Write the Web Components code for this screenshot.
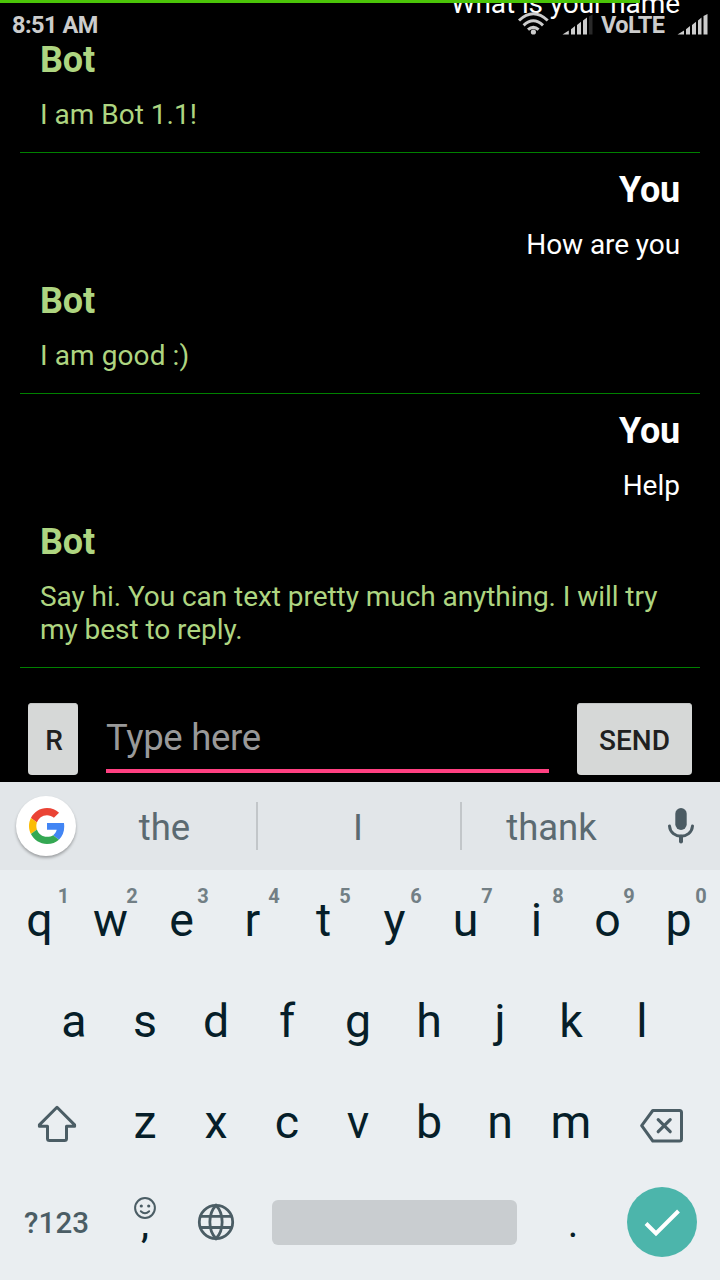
<!DOCTYPE html>
<html lang="en">
<head>
<meta charset="utf-8">
<title>Bot chat</title>
<style>
  html, body { margin: 0; background: #000; }
  body { font-family: Roboto, "Liberation Sans", sans-serif; overflow: hidden; }
</style>
</head>
<body>
<bot-app></bot-app>
<script>
const define = (name, html) => customElements.define(name, class extends HTMLElement {
  constructor() {
    super();
    this.attachShadow({ mode: "open" }).innerHTML = typeof html === "function" ? html(this) : html;
  }
});

/* Icons: each entry is [width, height, viewBox, markup]. */
const icons = {
  wifi: [32, 24, "517 12 32 24", `<g fill="none" stroke="#ccc" stroke-width="3"><path d="M519 20.5Q533.300 7 547.700 20.500M523.600 25.300Q533.300 16.200 543 25.300M528 29.700Q533.300 25 538.600 29.700"/></g><circle cx="533.400" cy="32" r="2.600" fill="#ccc"/>`],
  signal4: [31, 22, "562 14 31 22", `<path fill="#ccc" d="M562.500 34.500 568.800 30.500V34.500ZM571 29.300 575 26V34.500H571ZM577 25 581 21.800V34.500H577ZM583 20.500 587 17.500V34.500H583Z"/><path fill="#292929" d="M589 16.500 592.500 14.500V34.500H589Z"/>`],
  signal5: [31, 22, "677 14 31 22", `<path fill="#ccc" d="M677.500 34.500 684 30.500V34.500ZM686 29.300 690 26V34.500H686ZM692 25 696 21.800V34.500H692ZM698 20.500 701.500 17.500V34.500H698ZM703.500 16 707.500 14V34.500H703.500Z"/>`],
  google: [36, 36, "0 0 48 48", `<path fill="#EA4335" d="M24 9.500c3.540 0 6.710 1.220 9.210 3.600l6.850-6.850C35.900 2.380 30.470 0 24 0 14.620 0 6.510 5.380 2.560 13.220l7.980 6.190C12.430 13.720 17.740 9.500 24 9.500z"/><path fill="#4285F4" d="M46.980 24.550c0-1.570-.15-3.090-.38-4.550H24v9.020h12.940c-.58 2.960-2.260 5.480-4.780 7.180l7.730 6c4.510-4.180 7.090-10.360 7.090-17.650z"/><path fill="#FBBC05" d="M10.530 28.590c-.48-1.450-.76-2.990-.76-4.590s.27-3.140.76-4.590l-7.980-6.190C.92 16.460 0 20.120 0 24c0 3.880.92 7.540 2.560 10.780l7.970-6.190z"/><path fill="#34A853" d="M24 48c6.480 0 11.930-2.130 15.890-5.810l-7.730-6c-2.150 1.450-4.920 2.300-8.160 2.300-6.260 0-11.570-4.220-13.470-9.910l-7.980 6.190C6.510 42.620 14.620 48 24 48z"/>`],
  mic: [28, 37, "667 807 28 37", `<rect x="675.300" y="808" width="11.400" height="22" rx="5.700" fill="#4b5b63"/><path d="M669.500 826C670.500 839.500 691.500 839.500 692.500 826" fill="none" stroke="#4b5b63" stroke-width="3" stroke-linecap="round"/><path d="M681 836.500V841.500" stroke="#4b5b63" stroke-width="4" stroke-linecap="round"/>`],
  shift: [40, 38, "37 1105 40 38", `<path d="M57 1107.300 74.600 1124.900V1126.200H66.500V1138.500Q66.500 1140.500 64.500 1140.500H49.500Q47.500 1140.500 47.500 1138.500V1126.200H39.400V1124.900Z" fill="none" stroke="#4b5d65" stroke-width="3" stroke-linejoin="round"/>`],
  erase: [44, 36, "640 1108 44 36", `<path d="M652.800 1110.500H679.500Q681.500 1110.500 681.500 1112.500V1139Q681.500 1141 679.500 1141H652.800L641.700 1125.700Z" fill="none" stroke="#4b5d65" stroke-width="3" stroke-linejoin="round"/><path d="M658.200 1119.700 670.200 1131.700M670.200 1119.700 658.200 1131.700" stroke="#4b5d65" stroke-width="3.200" stroke-linecap="round"/>`],
  smile: [24, 24, "133 1196 24 24", `<circle cx="145" cy="1208" r="9.900" fill="none" stroke="#4b5d65" stroke-width="2"/><circle cx="141.300" cy="1206" r="1.600" fill="#4b5d65"/><circle cx="148.700" cy="1206" r="1.600" fill="#4b5d65"/><path d="M140.800 1211.200Q145 1215.200 149.200 1211.200" fill="none" stroke="#4b5d65" stroke-width="1.900" stroke-linecap="round"/>`],
  globe: [38, 38, "197 1203 38 38", `<g fill="none" stroke="#4b5d65" stroke-width="2.800"><circle cx="216" cy="1222" r="16.700"/><path d="M201 1216.400H231M201 1227.500H231M216 1205.300C207.800 1214 207.800 1230 216 1238.700C224.200 1230 224.200 1214 216 1205.300Z"/></g>`],
  check: [70, 70, "627 1187 70 70", `<circle cx="662" cy="1222" r="35" fill="#4cb5ab"/><path d="M646 1223.500 656 1233.500 678.500 1211" fill="none" stroke="#fff" stroke-width="4"/>`]
};
define("ui-icon", el => {
  const [w, h, box, body] = icons[el.getAttribute("name")];
  return `<style>:host{display:block;flex:none}svg{display:block}</style><svg width="${w}" height="${h}" viewBox="${box}">${body}</svg>`;
});

define("status-bar", `
<style>
  :host { position: absolute; inset: 0 0 auto 0; height: 50px; display: flex; flex-direction: column; z-index: 2; color: #ccc; }
  .load { width: 640px; height: 3px; background: #4bc408; }
  .row { display: flex; align-items: flex-start; padding: 8px 12px 0; font: 700 23.500px/28px Roboto, sans-serif; }
  .time { flex: 1; letter-spacing: -.5px; }
  .wifi { margin: 1px 13px 0 0; }
  .sig { margin-top: 3px; }
  .volte { width: 67px; margin: 0 9px 0 8px; letter-spacing: -.5px; }
</style>
<div class="load"></div>
<div class="row"><span class="time">8:51 AM</span><ui-icon class="wifi" name="wifi"></ui-icon><ui-icon class="sig" name="signal4"></ui-icon><span class="volte">VoLTE</span><ui-icon class="sig" name="signal5"></ui-icon></div>`);

define("chat-message", el => `
<style>
  :host { display: block; color: #fff; text-align: right; padding: 0 20px; margin-bottom: 19px; }
  :host([from="Bot"]) { color: #aed581; text-align: left; margin-bottom: 21px; }
  .name { font-weight: 700; font-size: 36px; line-height: 42px; margin-bottom: 17px; letter-spacing: -.2px; }
  .text { font-size: 28px; line-height: 33px; }
</style>
<div class="name">${el.getAttribute("from")}</div><div class="text"><slot></slot></div>`);

define("chat-exchange", `
<style>:host { display: block; flex: none; padding-top: 16px; border-bottom: 1px solid #008000; }</style><slot></slot>`);

define("chat-log", `
<style>:host { display: flex; flex-direction: column; justify-content: flex-end; height: 668px; padding: 0 20px; overflow: hidden; }</style><slot></slot>`);

define("raised-button", `
<style>:host { display: flex; align-items: center; justify-content: center; box-sizing: border-box; height: 72px; padding-top: 2px; border-radius: 4px; background: #d6d8d7; color: #202020; font-weight: 500; font-size: 28px; line-height: 33px; box-shadow: inset 0 1px #c3c5c4; }</style><slot></slot>`);

define("chat-composer", `
<style>
  :host { display: flex; box-sizing: border-box; height: 114px; padding: 35px 28px 0; gap: 28px; }
  .reset { width: 50px; padding-left: 2px; } .send { width: 115px; }
  .field { flex: 1; box-sizing: border-box; height: 70px; border-bottom: 4px solid #ff4081; color: #999; font-size: 36.500px; line-height: 42px; padding-top: 14px; letter-spacing: -.3px; }
</style>
<raised-button class="reset">R</raised-button><div class="field">Type here</div><raised-button class="send">SEND</raised-button>`);

define("suggestion-strip", `
<style>
  :host { display: flex; align-items: center; height: 88px; box-sizing: border-box; background: #e2e6e9; color: #5b6a71; font-size: 36.500px; }
  .g { display: flex; align-items: center; justify-content: center; box-sizing: border-box; width: 60px; height: 60px; padding-left: 1px; margin: 0 -4px 0 16px; border-radius: 50%; background: #fff; box-shadow: 0 2px 3px rgba(0,0,0,.3); }
  .word { box-sizing: border-box; width: 202px; text-align: center; line-height: 42px; padding: 3px 2px 0 0; }
  .first { width: 184px; padding: 3px 0 0 1px; }
  .bar { width: 2px; height: 48px; background: #c2c6c9; }
  .last { width: 179px; padding-right: 0; margin-right: 26px; }
  .mic { margin-bottom: 1px; }
</style>
<span class="g"><ui-icon name="google"></ui-icon></span><span class="word first">the</span><i class="bar"></i><span class="word">I</span><i class="bar"></i><span class="word last">thank</span><ui-icon class="mic" name="mic"></ui-icon>`);

define("kb-key", el => `
<style>
  :host { display: block; position: relative; width: 71px; flex: none; text-align: center; font-size: 46.500px; line-height: 54px; color: #061e29; }
  .hint { position: absolute; top: -9px; left: 37px; width: 40px; font-size: 20px; line-height: 24px; font-weight: 700; color: #727f85; }
  :host([hint="1"]) .hint { left: 39.500px; }
  :host([hint="0"]) .hint { left: 38px; }
</style>
<slot></slot>${el.hasAttribute("hint") ? `<span class="hint">${el.getAttribute("hint")}</span>` : ""}`);

const keys = (s, hints = "") => [...s].map((c, i) => `<kb-key${hints ? ` hint="${hints[i]}"` : ""}>${c}</kb-key>`).join("");
define("soft-keyboard", `
<style>
  :host { display: block; height: 410px; background: #eaeef1; overflow: hidden; }
  .row { display: flex; height: 101px; box-sizing: border-box; padding-top: 23px; }
  .r1 { padding-left: 4px; } .r2 { padding-left: 38.500px; }
  .r3 { padding-left: 37px; }
  .shift { margin: 10px 32.500px 0 0; } .erase { margin: 13px 0 0 33.500px; }
  .r4 { height: 107px; padding: 1px 0 0 24px; }
  .sym { width: 109px; padding-top: 32px; font-size: 29.500px; line-height: 34px; letter-spacing: .15px; font-weight: 500; color: #4b5d65; }
  .emoji { width: 24px; padding-top: 22px; text-align: center; color: #061e29; font-size: 36px; line-height: 20px; font-weight: 500; }
  .emoji ui-icon { margin-bottom: -5px; }
  .globe { margin: 29px 37px 0 40px; }
  .space { width: 245px; height: 45px; margin-top: 26px; border-radius: 6px; background: #c9cdd0; }
  .dot { box-sizing: border-box; width: 110px; text-align: center; padding: 27px 0 0 2px; font-size: 40px; line-height: 46px; color: #061e29; }
  .go { margin-top: 13px; }
</style>
<div class="row r1">${keys("qwertyuiop", "1234567890")}</div>
<div class="row r2">${keys("asdfghjkl")}</div>
<div class="row r3"><ui-icon class="shift" name="shift"></ui-icon>${keys("zxcvbnm")}<ui-icon class="erase" name="erase"></ui-icon></div>
<div class="row r4"><span class="sym">?123</span><span class="emoji"><ui-icon name="smile"></ui-icon>,</span><ui-icon class="globe" name="globe"></ui-icon><i class="space"></i><span class="dot">.</span><ui-icon class="go" name="check"></ui-icon></div>`);

define("bot-app", `
<style>
  :host { display: block; position: relative; width: 720px; height: 1280px; overflow: hidden; background: #000; }
  .tight { letter-spacing: -.09px; }
  .snug { letter-spacing: -.055px; }
  .loose { letter-spacing: .09px; }
</style>
<status-bar></status-bar>
<chat-log>
  <chat-exchange><chat-message from="You" class="tight">What is your name</chat-message><chat-message from="Bot">I am Bot 1.1!</chat-message></chat-exchange>
  <chat-exchange><chat-message from="You" class="tight">How are you</chat-message><chat-message from="Bot" class="loose">I am good :)</chat-message></chat-exchange>
  <chat-exchange><chat-message from="You">Help</chat-message><chat-message from="Bot" class="snug">Say hi. You can text pretty much anything. I will try my best to reply.</chat-message></chat-exchange>
</chat-log>
<chat-composer></chat-composer>
<suggestion-strip></suggestion-strip>
<soft-keyboard></soft-keyboard>`);
</script>
</body>
</html>
